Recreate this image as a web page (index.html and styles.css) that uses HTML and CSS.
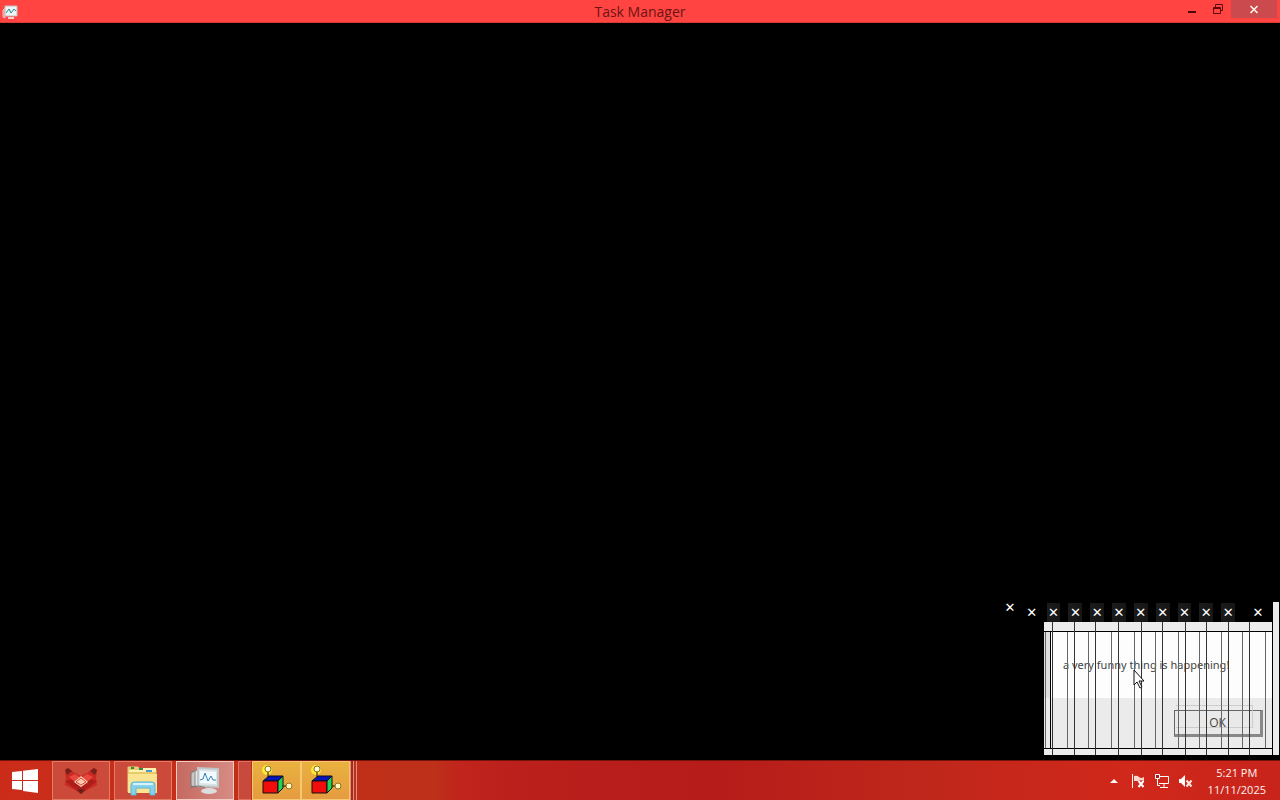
FILE: index.html
```html
<!DOCTYPE html>
<html lang="en">
<head>
<meta charset="utf-8">
<title>Task Manager</title>
<link rel="stylesheet" href="styles.css">
</head>
<body>
<header class="titlebar">
  <svg class="title-icon" width="18" height="18" viewBox="0 0 18 18"><path d="M3 8l2-2v10l-2-1z" fill="#d99" stroke="#fbb"/><path d="M5 4h12v10H5z" fill="#edf5f5" stroke="#cbb"/><path d="M6 11l3-4 2 4 3-4 2 2" fill="none" stroke="#268b98"/><path d="M8 16h6" stroke="#fcc" stroke-width="2"/></svg>
  <h1 class="title">Task Manager</h1>
  <div class="controls">
    <button class="ctl" aria-label="Minimize"><svg width="12" height="12"><path d="M2 9h8" stroke="#4d0808" stroke-width="2"/></svg></button>
    <button class="ctl" aria-label="Restore"><svg width="12" height="12"><path d="M1.500 4.500h7v6h-7zM1 5.500h8M3.500 4V1.500h7v6H9" fill="none" stroke="#5d0a0a"/></svg></button>
    <button class="ctl ctl-close" aria-label="Close"><svg width="12" height="12"><path d="M2.500 3l7 7m0-7l-7 7" stroke="#fff0e8" stroke-width="1.700"/></svg></button>
  </div>
</header>

<main class="desktop">
  <div class="trail">
    <button class="x x-first" aria-label="Close">✕</button>
    <button class="x" aria-label="Close">✕</button>
    <button class="x shade" aria-label="Close">✕</button>
    <button class="x shade" aria-label="Close">✕</button>
    <button class="x shade" aria-label="Close">✕</button>
    <button class="x shade" aria-label="Close">✕</button>
    <button class="x shade" aria-label="Close">✕</button>
    <button class="x shade" aria-label="Close">✕</button>
    <button class="x shade" aria-label="Close">✕</button>
    <button class="x shade" aria-label="Close">✕</button>
    <button class="x shade" aria-label="Close">✕</button>
    <button class="x" aria-label="Close">✕</button>
  </div>
  <div class="edge"></div>
  <section class="dialog" role="dialog" aria-label="Message">
    <div class="dialog-inner">
      <p class="message">a very funny thing is happening!</p>
      <div class="dialog-foot"><button class="ok">OK</button></div>
    </div>
    <svg class="lines" width="228" height="133" viewBox="0 0 228 133" shape-rendering="crispEdges">
      <path d="M132 83.500h76.500v22H132M208.500 84v22" fill="none" stroke="#ccc"/>
      <path d="M8.500 0v133M30.500 0v133M51.500 0v133M74.500 0v133M97.500 0v133M118.500 0v133M141.500 0v133M162.500 0v133M184.500 0v133M205.500 0v133" stroke="#333"/>
      <path d="M1.500 10v116M23.500 10v116M44.500 10v116M67.500 10v116M90.500 10v116M111.500 10v116M134.500 10v116M155.500 10v116M177.500 10v116M198.500 10v116M221.500 10v116" stroke="#666"/>
      <path d="M6.500 10v116" stroke="#000"/>
    </svg>
  </section>
  <svg class="cursor" width="12" height="20" viewBox="0 0 12 20"><path d="M1 1v15l3-3 3 6 2-1-3-6h5z" fill="#fff" stroke="#111"/></svg>
</main>

<footer class="taskbar">
  <button class="start" aria-label="Start"><svg width="28" height="26" viewBox="0 0 28 26"><path d="M1 4l10-1v9H1zM12 2.800L27 1v11H12zM1 13h10v9L1 21zM12 13h15v12l-15-2z" fill="#fff"/></svg></button>
  <button class="task" aria-label="Fox app"><svg width="34" height="28" viewBox="0 0 34 28"><path d="M1 3l3-2 7 5 6 3 6-3 7-5 3 2-1 9 1 6-8 4-8 5-8-5-8-4 1-6z" fill="#c92823"/><path d="M1 3l3-2 4 3-5 4zM33 3l-3-2-4 3 5 4z" fill="#762019"/><path d="M1 14l8-2 8 5 8-5 8 2-9 7-7 4-7-4z" fill="#ad1e1a"/><path d="M5 10l6-3 6 4 6-4 6 3-12 10z" fill="#e9483e"/><path d="M17 9l7 6-7 5-7-5z" fill="#ffc9b0"/><path d="M12 15l5-4 5 4-5 3z" fill="none" stroke="#d34b3c"/><path d="M13 23l4 4 4-4-4-1z" fill="#692017"/></svg></button>
  <button class="task" aria-label="File Explorer"><svg width="34" height="32" viewBox="0 0 34 32"><path d="M2 2h10l2 3h16v22H2z" fill="#e8ca69" stroke="#e4d17a"/><path d="M3 5h11l3-2h13v4H3z" fill="#fff1b2"/><path d="M5 3h3M13 4h4" stroke="#2e8b50" stroke-width="2"/><path d="M20 6h6" stroke="#4c98d0" stroke-width="2"/><path d="M2 9h29v19H2z" fill="#fae391"/><path d="M5 30V20q0-3 3-3h18q3 0 3 3v10h-5v-7H10v7z" fill="#87d2ea" stroke="#5ab6d6"/><path d="M7 19h20" stroke="#d6f4fa" stroke-width="2"/></svg></button>
  <button class="task task-active" aria-label="Task Manager"><svg width="32" height="28" viewBox="0 0 32 28"><path d="M2 6l5-3v17l-5-1z" fill="#c8c8c8" stroke="#777"/><path d="M6 4l4-2v18l-4-1z" fill="#e8e8e0" stroke="#888"/><path d="M9 1l20 1v18L9 19z" fill="#d9e5e9" stroke="#c0c5c5" stroke-width="2"/><path d="M11 4l16 1v12l-16-1z" fill="#f2faff"/><path d="M11 13l3-1 2-6 3 8 3-5 2 4h3" fill="none" stroke="#3981b5"/><path d="M1 21q8-4 15 0" fill="none" stroke="#777"/><ellipse cx="20" cy="24" rx="8" ry="3" fill="#ddd"/></svg></button>
  <div class="stack-edge"></div>
  <button class="task task-alert" aria-label="Program 1"><svg width="32" height="32" viewBox="0 0 32 32"><circle cx="6" cy="5" r="5" fill="#ffe932"/><path d="M7 6v10M22 21h6" stroke="#111"/><path d="M2 16l6-5h14l-5 5z" fill="#0714bd" stroke="#111"/><path d="M2 16h15v12H2z" fill="#f20d0d" stroke="#111"/><path d="M17 16l5-5v12l-5 5z" fill="#20d455" stroke="#111"/><circle cx="7" cy="4" r="3" fill="#fffbd8" stroke="#8b7420"/><circle cx="28" cy="21" r="3" fill="#fff7bd" stroke="#8b7420"/></svg></button>
  <button class="task task-alert" aria-label="Program 2"><svg width="32" height="32" viewBox="0 0 32 32"><circle cx="6" cy="5" r="5" fill="#ffe932"/><path d="M7 6v10M22 21h6" stroke="#111"/><path d="M2 16l6-5h14l-5 5z" fill="#0714bd" stroke="#111"/><path d="M2 16h15v12H2z" fill="#f20d0d" stroke="#111"/><path d="M17 16l5-5v12l-5 5z" fill="#20d455" stroke="#111"/><circle cx="7" cy="4" r="3" fill="#fffbd8" stroke="#8b7420"/><circle cx="28" cy="21" r="3" fill="#fff7bd" stroke="#8b7420"/></svg></button>
  <div class="stack-end"></div>
  <div class="tray">
    <button class="tray-btn" aria-label="Show hidden icons"><svg width="16" height="16"><path d="M4 10l4-4 4 4z" fill="#fff"/></svg></button>
    <button class="tray-btn" aria-label="Action Center"><svg width="16" height="16"><path d="M2.500 1v14" stroke="#fff"/><path d="M4 3q3-1 5 1t5 0v4H4z" fill="#f8d9d0"/><path d="M8.500 8l5 6m0-6l-5 6" stroke="#c8281c" stroke-width="4"/><path d="M8.500 8l5 6m0-6l-5 6" stroke="#fff" stroke-width="2"/></svg></button>
    <button class="tray-btn" aria-label="Network"><svg width="16" height="16"><path d="M5 3.500h9.500v7H5M10 11v3M6 14.500h8M3.500 6v6.500H6" fill="none" stroke="#fff"/><path d="M1.500 1.500h4v4h-4z" fill="#a42020" stroke="#fff"/></svg></button>
    <button class="tray-btn" aria-label="Volume muted"><svg width="16" height="16"><path d="M1 6h2l4-4v12l-4-4H1z" fill="#fff"/><path d="M8.500 7.500l5 6m0-6l-5 6" stroke="#ffe5df" stroke-width="2"/></svg></button>
    <div class="clock"><time>5:21 PM</time><time>11/11/2025</time></div>
  </div>
</footer>
</body>
</html>
```

FILE: styles.css
```css
* { box-sizing: border-box; }
body {
  margin: 0;
  min-height: 100vh;
  display: flex;
  flex-direction: column;
  background: #000;
  font-family: "Open Sans", "Noto Sans", sans-serif;
}
button {
  padding: 0;
  border: 0;
  background: none;
  color: inherit;
  font: inherit;
}
svg { display: block; }

.titlebar {
  display: grid;
  grid-template-columns: 1fr auto 1fr;
  height: 23px;
  background: #ff4441;
  border-bottom: 1px solid #d93a36;
}
.title-icon { margin-top: 2px; }
.title {
  margin: 0;
  font-size: 14px;
  font-weight: 400;
  line-height: 23px;
  color: #6b1414;
}
.controls {
  display: flex;
  justify-content: flex-end;
  align-items: flex-start;
}
.ctl {
  width: 26px;
  height: 18px;
  display: grid;
  place-items: center;
}
.ctl-close {
  width: 46px;
  margin-right: 3px;
  background: #ca4a4d;
}

.desktop { flex: 1; position: relative; }
.trail {
  position: absolute;
  right: 3px;
  bottom: 137px;
  width: 278px;
  height: 20px;
  display: grid;
  grid-template-columns: repeat(11, 1fr) 38px;
}
.x {
  height: 20px;
  font-family: "DejaVu Sans", sans-serif;
  font-size: 13px;
  line-height: 20px;
  color: #fff;
}
.x-first { height: 10px; line-height: 10px; }
.shade { background: linear-gradient(90deg, #000 20%, #1b1b1b 20%, #161616 80%, #000 80%); }
.edge {
  position: absolute;
  right: 1px;
  bottom: 5px;
  width: 6px;
  height: 153px;
  background: #ebebeb;
}
.dialog {
  position: absolute;
  right: 8px;
  bottom: 5px;
  width: 228px;
  padding: 9px 0 6px;
  background: #ececec;
}
.dialog-inner {
  border: 1px solid #000;
  border-width: 1px 0;
  background: #fdfdfd;
  box-shadow: inset 6px 0 0 #dedede;
}
.message {
  margin: 0;
  padding: 23px 0 23px 19px;
  font-family: "Noto Sans", sans-serif;
  font-size: 11px;
  line-height: 20px;
  color: #444;
}
.dialog-foot {
  display: flex;
  justify-content: flex-end;
  padding: 12px 9px 11px;
  background: #ebebeb;
}
.ok {
  width: 89px;
  height: 27px;
  border: 1px solid #666;
  border-right: 3px solid #888;
  border-bottom: 3px solid #888;
  background: #e9e9e9;
  font-size: 12px;
  color: #444;
}
.lines { position: absolute; top: 0; left: 0; }
.cursor { position: absolute; right: 135px; bottom: 71px; }

.taskbar {
  display: flex;
  height: 40px;
  border-top: 1px solid #75120c;
  background: linear-gradient(90deg, #cb2c19 0, #bd3019 34%, #c0241c 36%, #bb201c 40%, #b51c1a 55%, #bf271b 72%, #d0281a 88%, #c8241c);
}
.start {
  width: 50px;
  margin-right: 2px;
  display: grid;
  place-items: center;
}
.task {
  width: 58px;
  margin-right: 4px;
  display: grid;
  place-items: center;
  border: 1px solid #e27c66;
  background: #cc4a39;
}
.task-active {
  border-color: #f5cbc1;
  background: linear-gradient(90deg, #c56a61, #d78c84);
}
.stack-edge {
  width: 13px;
  margin-right: 1px;
  border: 1px solid #df735f;
  border-right: 0;
  background: #c84a3d;
}
.task-alert {
  width: 49px;
  margin-right: 0;
  border-color: #f5c873;
  background: linear-gradient(#e9b13e, #e59c40);
}
.stack-end {
  width: 7px;
  border: 1px solid #e58b75;
  border-width: 0 1px;
  background: linear-gradient(90deg, #a72a1d 2px, #e58b75 2px, #e58b75 3px, #b43323 3px);
}
.tray {
  display: flex;
  align-items: center;
  margin-left: auto;
  padding-right: 14px;
  color: #fff3ee;
}
.tray-btn { width: 24px; display: grid; place-items: center; }
.clock {
  display: flex;
  flex-direction: column;
  align-items: center;
  margin-left: 10px;
  font-size: 11px;
  line-height: 17px;
}
```
